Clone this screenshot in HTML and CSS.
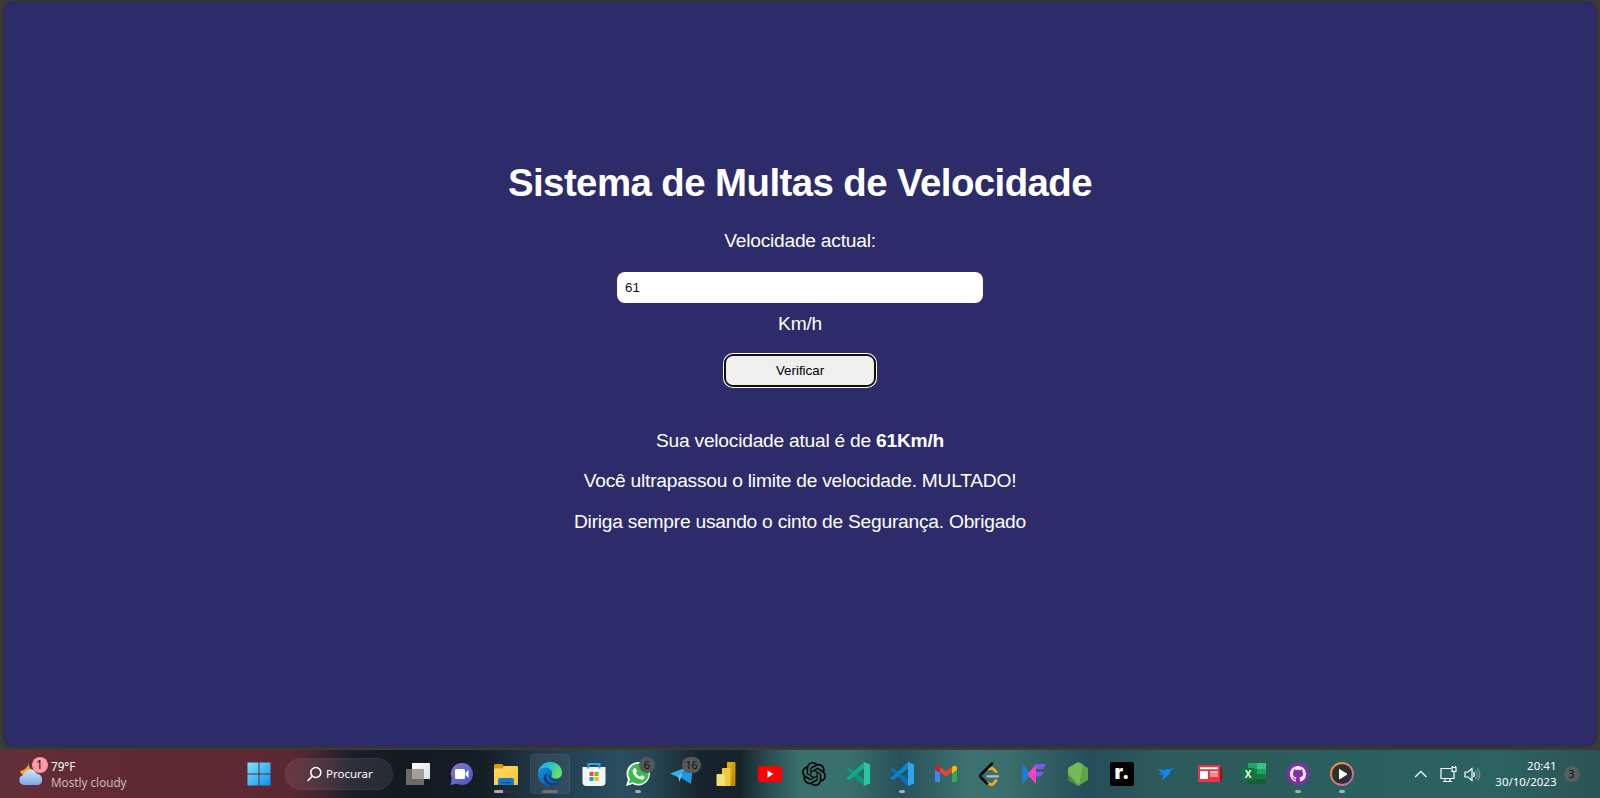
FILE: index.html
```html
<!DOCTYPE html>
<html lang="pt">
<head>
<meta charset="utf-8">
<title>Sistema de Multas de Velocidade</title>
<link rel="stylesheet" href="styles.css">
</head>
<body>
<div class="browser">
  <main class="page">
    <h1 class="title">Sistema de Multas de Velocidade</h1>
    <label class="label" for="speed">Velocidade actual:</label>
    <input class="speed" id="speed" type="text" value="61">
    <span class="unit">Km/h</span>
    <button class="check" type="button">Verificar</button>
    <section class="result">
      <p>Sua velocidade atual é de <strong>61Km/h</strong></p>
      <p>Você ultrapassou o limite de velocidade. MULTADO!</p>
      <p>Diriga sempre usando o cinto de Segurança. Obrigado</p>
    </section>
  </main>
</div>
<footer class="taskbar">
  <div class="weather">
    <div class="weather-icon">
      <svg width="26" height="24" viewBox="0 0 26 24">
        <defs><linearGradient id="cl" x1="0" y1="0" x2="0" y2="1"><stop offset="0" stop-color="#d3e3fb"/><stop offset="1" stop-color="#79a7e9"/></linearGradient></defs>
        <path d="M10 0c-1 5-4 8-9 9 1 4 5 6 10 5l4-6c-4 0-6-4-5-8z" fill="#f5a623"/>
        <path d="M5 23a5 5 0 0 1-.6-9.900A7 7 0 0 1 17.500 11.500 6 6 0 0 1 19.500 23z" fill="url(#cl)"/>
      </svg>
      <span class="alert">1</span>
    </div>
    <div class="weather-text"><span>79°F</span><span class="muted">Mostly cloudy</span></div>
  </div>
  <div class="apps">
    <div class="app"><svg width="24" height="24" viewBox="0 0 24 24"><defs><linearGradient id="win" x1="0" y1="0" x2="1" y2="1"><stop offset="0" stop-color="#7de7fd"/><stop offset="1" stop-color="#0f8ef2"/></linearGradient></defs><path fill="url(#win)" d="M.5.500h11v11H.5zM12.500.500h11v11h-11zM.5 12.500h11v11H.5zM12.500 12.500h11v11h-11z"/></svg></div>
    <div class="search"><svg width="16" height="16" viewBox="0 0 16 16" fill="none" stroke="#fff" stroke-width="1.600" stroke-linecap="round"><circle cx="8.800" cy="6.500" r="5"/><path d="M5.200 10.200 1 14.500"/></svg><span>Procurar</span></div>
    <div class="app"><svg width="24" height="24" viewBox="0 0 24 24"><defs><linearGradient id="tv" x1="0" y1="0" x2="1" y2="1"><stop offset="0" stop-color="#fff"/><stop offset="1" stop-color="#ddd"/></linearGradient></defs><path fill="url(#tv)" d="M6 1h18v16H6z"/><path fill="#6a6a6a" d="M0 7h18v16H0z"/><path fill="#a0a0a0" d="M6 7h12v10H6z"/></svg></div>
    <div class="app"><svg width="24" height="24" viewBox="0 0 24 24"><defs><linearGradient id="ch" x1="0" y1="0" x2="1" y2="1"><stop offset="0" stop-color="#9d75b5"/><stop offset=".5" stop-color="#6467cd"/><stop offset="1" stop-color="#4750c0"/></linearGradient></defs><path fill="url(#ch)" d="M12 1a11 11 0 1 1-5 20.800L.5 23l1.300-6.500A11 11 0 0 1 12 1z"/><rect x="5" y="7" width="10" height="10" rx="1.500" fill="#fff"/><path fill="#fff" d="m15.500 11 3-3v8l-3-3z"/></svg></div>
    <div class="app"><svg width="24" height="24" viewBox="0 0 24 24"><defs><linearGradient id="fo" x1="0" y1="0" x2="1" y2="1"><stop offset="0" stop-color="#ffdc69"/><stop offset="1" stop-color="#fbc02d"/></linearGradient></defs><path fill="#d99a0b" d="M0 3.500Q0 2 1.500 2h6.500l2.500 2.500V8H0z"/><path fill="url(#fo)" d="M0 6.500h8L10.500 4H23q1 0 1 1v18H0z"/><path fill="#1878c8" d="M4 23v-5q0-2 2-2h12q2 0 2 2v5z"/><path fill="#0f5a9c" d="M7 20h10v1.500H7z"/></svg><i class="run run-progress"></i></div>
    <div class="app app-active"><svg width="24" height="24" viewBox="0 0 24 24"><defs><linearGradient id="e1" x1="0" y1="0" x2="1" y2=".4"><stop offset="0" stop-color="#21a4e8"/><stop offset=".55" stop-color="#27c4c9"/><stop offset="1" stop-color="#6be35c"/></linearGradient><linearGradient id="e2" x1="0" y1="0" x2="1" y2="1"><stop offset="0" stop-color="#1797e2"/><stop offset="1" stop-color="#0c4ea0"/></linearGradient></defs><circle cx="12" cy="12" r="12" fill="url(#e2)"/><path fill="url(#e1)" d="M.1 11.200A12 12 0 0 1 12 0c7 0 12 5 12 10.500 0 4-3 6-6 6s-4.800-1.100-4.400-2C15 12 14.500 6 8 5.700 4 5.500 1 8 .1 11.200z"/><path fill="#103f88" d="M9.500 11c-3 4 0 9 5 10 3 .5 6-1 8-3.500C20 22.500 14 25 10 22.500 4 19 4.500 13 9.500 11z"/><path fill="#2a4554" d="M11.500 10.500c-1.500 5 5 8.500 12 6.500l-1.700 1.700c-8 2.300-13.800-3.200-10.300-8.200z"/></svg><i class="run run-wide"></i></div>
    <div class="app"><svg width="24" height="24" viewBox="0 0 24 24"><path fill="none" stroke="#29a8ee" stroke-width="2" d="M6.500 7V2h11v5"/><path fill="#f5f6f8" d="M.5 5h23v15q0 4-4 4h-15q-4 0-4-4z"/><path fill="none" stroke="#1987d2" stroke-width="1.500" d="M6.200 4v2.500M17.800 4v2.500"/><path fill="#f25022" d="M7.500 10h4v4h-4z"/><path fill="#7fba00" d="M12.500 10h4v4h-4z"/><path fill="#00a4ef" d="M7.500 15h4v4h-4z"/><path fill="#ffb900" d="M12.500 15h4v4h-4z"/></svg></div>
    <div class="app"><svg width="24" height="24" viewBox="0 0 24 24"><path fill="#fff" d="M12.300 0a11.700 11.700 0 1 1-5.600 22L0 24l2-6.600A11.700 11.700 0 0 1 12.300 0z"/><path fill="#3bbd4e" d="M12.300 1.700a10.100 10.100 0 1 1-5.300 18.500l-4.500 1.300 1.400-4.300A10.100 10.100 0 0 1 12.300 1.700z"/><path fill="#fff" d="M8 6.500c.8-.6 1.500-.5 1.900.2l1 2.200c.2.800-1.300 1.400-1 2 .8 1.700 2.200 2.900 4 3.600.7.200 1.400-1.500 2.100-1.300l2.300 1.200c.7.500-.1 2.300-1 2.800-3.200 2-11.300-3.700-10.600-8.400.2-1 .7-1.900 1.300-2.300z"/></svg><span class="count">6</span><i class="run"></i></div>
    <div class="app"><svg width="24" height="24" viewBox="0 0 24 24"><path fill="#35ade9" d="M0 11.500 23 3 7.500 15z"/><path fill="#1e98e0" d="m9 14.500 14-11L21 22z"/><path fill="#65c9f4" d="m8 14 5-3.500-2 4.500-1.500 5z"/></svg><span class="count count-wide">16</span></div>
    <div class="app"><svg width="24" height="24" viewBox="0 0 24 24"><defs><linearGradient id="pb" x1="0" y1="0" x2="1" y2="1"><stop offset="0" stop-color="#e8b51b"/><stop offset="1" stop-color="#bd7c08"/></linearGradient></defs><rect x="13" width="8.500" height="24" rx="1" fill="url(#pb)"/><rect x="8" y="6" width="8.500" height="18" rx="1" fill="#efc83b"/><rect x="2.500" y="12" width="8.500" height="12" rx="1" fill="#f8e078"/></svg></div>
    <div class="app"><svg width="24" height="24" viewBox="0 0 24 24"><rect y="4" width="24" height="16" rx="3" fill="#f00"/><path fill="#fff" d="m9.500 8.500 6 3.600-6 3.600z"/></svg></div>
    <div class="app"><svg width="24" height="24" viewBox="0 0 24 24"><path d="M22.2819 9.8211a5.9847 5.9847 0 0 0-.5157-4.9108 6.0462 6.0462 0 0 0-6.5098-2.9A6.0651 6.0651 0 0 0 4.9807 4.1818a5.9847 5.9847 0 0 0-3.9977 2.9 6.0462 6.0462 0 0 0 .7427 7.0966 5.98 5.98 0 0 0 .511 4.9107 6.051 6.051 0 0 0 6.5146 2.9001A5.9847 5.9847 0 0 0 13.2599 24a6.0557 6.0557 0 0 0 5.7718-4.2058 5.9894 5.9894 0 0 0 3.9977-2.9001 6.0557 6.0557 0 0 0-.7475-7.0729zm-9.022 12.6081a4.4755 4.4755 0 0 1-2.8764-1.0408l.1419-.0804 4.7783-2.7582a.7948.7948 0 0 0 .3927-.6813v-6.7369l2.02 1.1686a.071.071 0 0 1 .038.052v5.5826a4.504 4.504 0 0 1-4.4945 4.4944zm-9.6607-4.1254a4.4708 4.4708 0 0 1-.5346-3.0137l.142.0852 4.783 2.7582a.7712.7712 0 0 0 .7806 0l5.8428-3.3685v2.3324a.0804.0804 0 0 1-.0332.0615L9.74 19.9502a4.4992 4.4992 0 0 1-6.1408-1.6464zM2.3408 7.8956a4.485 4.485 0 0 1 2.3655-1.9728V11.6a.7664.7664 0 0 0 .3879.6765l5.8144 3.3543-2.0201 1.1685a.0757.0757 0 0 1-.071 0l-4.8303-2.7865A4.504 4.504 0 0 1 2.3408 7.872zm16.5963 3.8558L13.1038 8.364 15.1192 7.2a.0757.0757 0 0 1 .071 0l4.8303 2.7913a4.4944 4.4944 0 0 1-.6765 8.1042v-5.6772a.79.79 0 0 0-.407-.667zm2.0107-3.0231l-.142-.0852-4.7735-2.7818a.7759.7759 0 0 0-.7854 0L9.409 9.2297V6.8974a.0662.0662 0 0 1 .0284-.0615l4.8303-2.7866a4.4992 4.4992 0 0 1 6.6802 4.66zM8.3065 12.863l-2.02-1.1638a.0804.0804 0 0 1-.038-.0567V6.0742a4.4992 4.4992 0 0 1 7.3757-3.4537l-.142.0805L8.704 5.459a.7948.7948 0 0 0-.3927.6813zm1.0976-2.3654l2.602-1.4998 2.6069 1.4998v2.9994l-2.5974 1.4997-2.6067-1.4997Z"/></svg></div>
    <div class="app"><svg width="24" height="24" viewBox="0 0 24 24"><path fill="#0a9b7d" d="M.3 7.500 3 5.800 18 17.500V24z"/><path fill="#10ad8a" d="M.3 16.500 3 18.200 18 6.500V0z"/><path fill="#2bc5a4" d="m18 0 6 2.500v19L18 24z"/></svg></div>
    <div class="app"><svg width="24" height="24" viewBox="0 0 24 24"><path fill="#0872b9" d="M.3 7.500 3 5.800 18 17.500V24z"/><path fill="#0c83cd" d="M.3 16.500 3 18.200 18 6.500V0z"/><path fill="#2ba5f1" d="m18 0 6 2.500v19L18 24z"/></svg><i class="run"></i></div>
    <div class="app"><svg width="24" height="24" viewBox="0 0 24 24"><path fill="#4285f4" d="M1 6v14h5V9z"/><path fill="#34a853" d="M18 9v11h5V6z"/><path fill="#ea4335" d="M1 6q0-3 3-2.500l8 6 8-6v5l-8 6L1 7z"/><path fill="#c5221f" d="M1 6q0-3.500 3.500-2.300L6 5v6L1 7.500z"/><path fill="#fbbc04" d="M18 5q4-3 5 .8v2L18 11.500z"/></svg></div>
    <div class="app"><svg width="24" height="24" viewBox="0 0 24 24" fill="none" stroke-width="2.800" stroke-linecap="round" stroke-linejoin="round"><path stroke="#f5a623" d="m11 7 3.500-.8 3.500 3.300M9 20.500q4 3.500 6.500 1L18 18.500"/><path stroke="#111" d="M14 1.500 3 12.500q-1.500 1.500 0 3l6 6"/><path stroke="#b9bcbd" stroke-width="2.300" d="M9.500 14.300H20"/></svg></div>
    <div class="app"><svg width="24" height="24" viewBox="0 0 24 24"><path fill="#1d7de2" d="M.5 2v20L9 12z"/><path fill="#ff3fb8" d="M14 2v20l-8.500-9.500z"/><path fill="#7859f8" d="M14 2h10l-3 5h-7zM14 10h8l-3 4.500h-5z"/></svg></div>
    <div class="app"><svg width="24" height="24" viewBox="0 0 24 24"><path fill="#5da443" d="m12 0 10 6v12l-10 6-10-6V6z"/><path fill="#8bc96a" d="m12 0 5 2-4 22L2 11V6z" opacity=".55"/><path fill="#458937" d="m2 13 11 11-11-6z"/></svg></div>
    <div class="app"><span class="logo-r">r.</span></div>
    <div class="app"><svg width="24" height="24" viewBox="0 0 24 24"><path fill="#0e87f5" d="m4 7 7 1.500 2-2 3 1 1.500-1.500H20l-3 2-1.500 4L12 15l-4 4 1.500-6zM4.500 11.500l4 .500-.5 1.500z"/></svg></div>
    <div class="app"><svg width="24" height="24" viewBox="0 0 24 24"><path fill="#8e1426" d="M20 5h4v14.500H3z"/><path fill="#ea3346" d="M0 3h22v17H0z"/><path fill="#fff" d="M2 5.200h18v2H2zM2 9h8v8H2z"/><path fill="#fbbcc2" d="M12 9h8v2.500h-8z"/><path fill="#f78c95" d="M12 11.500h8V15h-8z"/></svg></div>
    <div class="app"><svg width="24" height="24" viewBox="0 0 24 24"><path fill="#21a366" d="M6 1h9v7H6z"/><path fill="#33c481" d="M15 1h9v6h-9z"/><path fill="#107c41" d="M6 7h18v10H6z"/><path fill="#21a366" d="M15 7h9v5h-9z"/><path fill="#185c37" d="M6 17h18v5H6z"/><rect y="6" width="12.500" height="12.500" rx="1" fill="#127443"/><text class="logo-x" x="6.200" y="16">X</text></svg></div>
    <div class="app"><svg width="24" height="24" viewBox="0 0 24 24"><circle cx="12" cy="12" r="11.300" fill="#862ca5"/><path fill="#f6edfa" transform="translate(4 4)" d="M8 0C3.580 0 0 3.580 0 8c0 3.540 2.290 6.530 5.470 7.590.4.070.55-.17.550-.38 0-.19-.01-.82-.01-1.490-2.010.370-2.530-.49-2.690-.94-.09-.23-.48-.94-.82-1.130-.28-.15-.68-.52-.01-.53.630-.01 1.080.580 1.230.820.720 1.210 1.870.870 2.330.660.070-.52.280-.87.510-1.070-1.780-.2-3.640-.89-3.640-3.950 0-.87.310-1.590.820-2.150-.08-.2-.36-1.020.080-2.120 0 0 .670-.21 2.200.820.640-.18 1.320-.27 2-.27s1.360.090 2 .270c1.530-1.040 2.200-.82 2.200-.82.440 1.100.160 1.920.080 2.120.510.560.820 1.270.820 2.150 0 3.070-1.870 3.750-3.650 3.950.290.250.540.730.540 1.480 0 1.070-.01 1.930-.01 2.200 0 .210.150.460.550.380A8.010 8.010 0 0 0 16 8c0-4.420-3.580-8-8-8z"/></svg><i class="run"></i></div>
    <div class="app"><svg width="24" height="24" viewBox="0 0 24 24"><defs><linearGradient id="mp" x1="0" y1="0" x2="1" y2="1"><stop offset="0" stop-color="#ff9d2e"/><stop offset=".5" stop-color="#e97a70"/><stop offset="1" stop-color="#b063d8"/></linearGradient></defs><circle cx="12" cy="12" r="11" fill="#303033" stroke="url(#mp)" stroke-width="1.800"/><path fill="#fff" stroke="#fff" stroke-linejoin="round" d="m9.500 7.500 7.500 4.700-7.500 4.700z"/></svg><i class="run"></i></div>
  </div>
  <div class="tray">
    <svg width="14" height="8" viewBox="0 0 14 8" fill="none" stroke="#fff" stroke-width="1.300"><path d="m1.200 7 5.600-5.600L12.400 7"/></svg>
    <svg class="net" width="17" height="17" viewBox="0 0 17 17" fill="none" stroke="#fff" stroke-width="1.200"><path d="M11 2.500H1v10h13V6M5 12.500v3M10 12.500v3M3 15.500h9M12 1.500h4V5.500h-4zM12.500 0v2M15.500 0v2"/></svg>
    <svg class="vol" width="17" height="15" viewBox="0 0 17 15" fill="none" stroke="#fff" stroke-width="1.200"><path d="M1 5h3l4-3.500v12L4 10H1z"/><path d="M9.500 5q1.800 2.500 0 5"/><path d="M11.500 3q3.500 4.500 0 9M13.500 1.500q4.500 6 0 12" opacity=".35"/></svg>
    <div class="clock"><span>20:41</span><span>30/10/2023</span></div>
    <span class="notes">3</span>
  </div>
</footer>
</body>
</html>
```
FILE: styles.css
```css
* { box-sizing: border-box; }

body {
  margin: 0;
  height: 798px;
  overflow: hidden;
  display: flex;
  flex-direction: column;
  background: #3b3b3b;
  font-family: "Liberation Sans", Arial, sans-serif;
}

.browser {
  height: 750px;
  padding: 2px 4px 4px;
  background: #3b3b3b;
}

.page {
  height: 744px;
  padding-top: 159px;
  border-radius: 9px;
  background: #2d2b6a;
  box-shadow: 0 0 3px #222;
  color: #fff;
  display: flex;
  flex-direction: column;
  align-items: center;
  font-size: 19.2px;
  line-height: 22px;
  letter-spacing: -0.235px;
}

.title {
  margin: 0;
  font-size: 38.4px;
  line-height: 44px;
  letter-spacing: -0.57px;
}

.label { margin-top: 25px; }

.speed {
  width: 366px;
  height: 31px;
  margin: 20px 0 10px;
  padding: 0 8px;
  border: 0;
  border-radius: 8px;
  background: #fff;
  color: #111;
  font: 13.333px "Liberation Sans", Arial, sans-serif;
}

.check {
  width: 150px;
  height: 31px;
  margin-top: 20px;
  padding: 0;
  border: 0;
  border-radius: 8px;
  outline: 2px solid #101010;
  outline-offset: -1px;
  box-shadow: 0 0 0 2px #fff;
  background: #efefef;
  color: #000;
  font: 13.333px "Liberation Sans", Arial, sans-serif;
}

.result {
  margin-top: 44px;
  display: flex;
  flex-direction: column;
  align-items: center;
  gap: 18.400px;
}

.result p { margin: 0; }

.taskbar {
  height: 48px;
  display: flex;
  align-items: center;
  color: #fff;
  font: 12px/16px "Noto Sans", "Open Sans", sans-serif;
  background: linear-gradient(90deg, #633039 0, #612a35 80px, #5c2833 290px, #402530 322px, #1d1e28 352px, #131a20 400px, #151d25 480px, #20394a 540px, #294e60 620px, #264454 655px, #17242d 700px, #16222a 740px, #28494f 765px, #3a706c 800px, #386f6c 850px, #28505a 900px, #3c7370 970px, #3a6d6c 1010px, #264c59 1090px, #2d5a5d 1160px, #2d5b5c 1260px, #29605f 1330px, #2c6262 1500px, #2c5354 1600px);
}

.weather {
  width: 237px;
  padding-left: 19px;
  display: flex;
  align-items: center;
  gap: 6px;
}

.weather-icon { position: relative; width: 26px; height: 24px; }

.alert {
  position: absolute;
  left: 12.500px;
  top: -5px;
  width: 16px;
  height: 16px;
  border-radius: 8px;
  background: #ff99a4;
  color: #111;
  text-align: center;
}

.weather-text { display: flex; flex-direction: column; font-size: 11.700px; }

.muted { color: #cdb9bd; }

.apps { width: 1127px; display: flex; align-items: center; }

.app {
  position: relative;
  width: 44px;
  height: 48px;
  display: flex;
  align-items: center;
  justify-content: center;
}

.app-active::before {
  content: "";
  position: absolute;
  inset: 4px 2px;
  border: 1px solid #ffffff0c;
  border-radius: 4px;
  background: #ffffff12;
}

.app svg { position: relative; }

.search {
  width: 108px;
  height: 32px;
  margin: 0 3px 0 4px;
  padding-left: 21px;
  display: flex;
  align-items: center;
  gap: 3px;
  border: 1px solid #ffffff0a;
  border-radius: 16px;
  background: #ffffff14;
  font-size: 11.500px;
}

.run {
  position: absolute;
  left: 19px;
  bottom: 5px;
  width: 6px;
  height: 3px;
  border-radius: 2px;
  background: #a2b3b7;
}

.run-wide { left: 14px; width: 16px; background: #75706f; }

.run-progress {
  left: 10px;
  width: 24px;
  background: linear-gradient(90deg, #aaa 9px, #29303a 9px);
}

.count {
  position: absolute;
  left: 23px;
  top: 7px;
  width: 16px;
  height: 16px;
  border-radius: 8px;
  background: #55585a;
  color: #111;
  font-size: 11px;
  text-align: center;
}

.count-wide { left: 22px; width: 19px; }

.logo-r {
  width: 24px;
  height: 24px;
  border-radius: 2px;
  background: #000;
  font: 900 20px/20px Inter, Roboto, sans-serif;
  text-align: center;
}

.logo-x { fill: #fff; font: bold 10px "Liberation Sans", sans-serif; text-anchor: middle; }

.tray { flex: 1; display: flex; align-items: center; padding-left: 50px; }

.net { margin-left: 12px; }

.vol { margin-left: 7px; }

.clock {
  width: 75.500px;
  display: flex;
  flex-direction: column;
  align-items: flex-end;
  font-size: 11.500px;
}

.notes {
  width: 16px;
  height: 16px;
  margin-left: 7px;
  border-radius: 50%;
  background: #55605f;
  color: #111;
  font-size: 11px;
  text-align: center;
}
```
